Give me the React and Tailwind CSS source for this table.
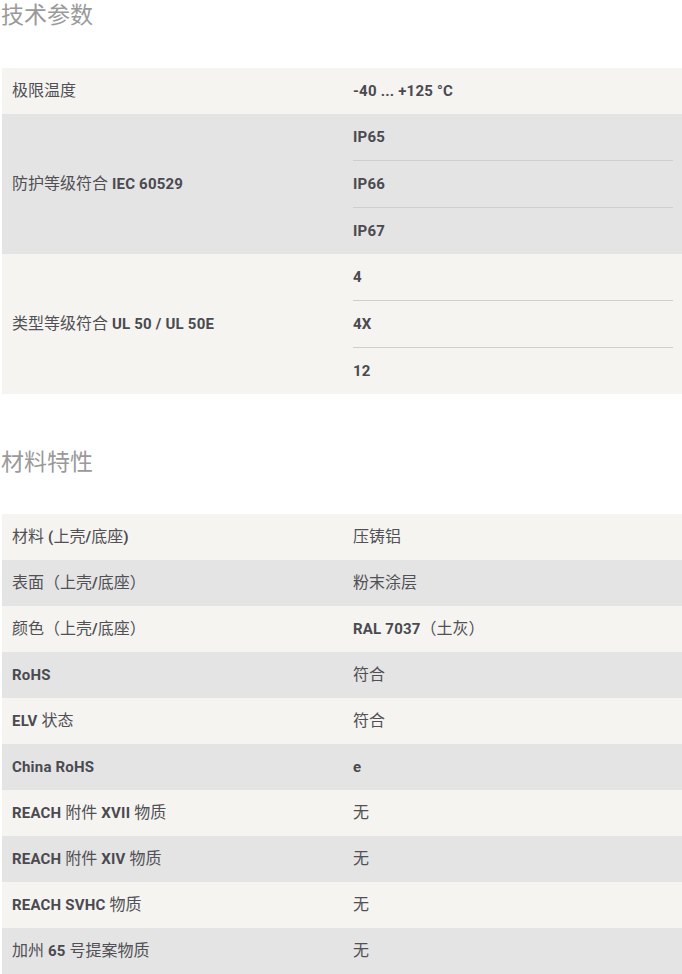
import { Fragment } from 'react'

const TECH = [
  { label: '极限温度', values: ['-40 ... +125 °C'] },
  { label: '防护等级符合 IEC 60529', values: ['IP65', 'IP66', 'IP67'] },
  { label: '类型等级符合 UL 50 / UL 50E', values: ['4', '4X', '12'] },
]

const MATERIAL = [
  { label: '材料 (上壳/底座)', values: ['压铸铝'] },
  { label: '表面（上壳/底座）', values: ['粉末涂层'] },
  { label: '颜色（上壳/底座）', values: ['RAL 7037（土灰）'] },
  { label: 'RoHS', values: ['符合'] },
  { label: 'ELV 状态', values: ['符合'] },
  { label: 'China RoHS', values: ['e'] },
  { label: 'REACH 附件 XVII 物质', values: ['无'] },
  { label: 'REACH 附件 XIV 物质', values: ['无'] },
  { label: 'REACH SVHC 物质', values: ['无'] },
  { label: '加州 65 号提案物质', values: ['无'] },
]

// latin runs are set heavier than the chinese ones
function Mixed({ text }) {
  const parts = text.split(/([\u3000-\u9fff\uff00-\uffef]+)/)
  return (
    <span>
      {parts.map((p, i) =>
        i % 2 === 1 ? (
          <span key={i} className="font-normal text-[16px] text-[#505055]">{p}</span>
        ) : (
          <span key={i} className="font-bold tracking-[0.2px]">{p}</span>
        )
      )}
    </span>
  )
}

function SpecTable({ rows }) {
  return (
    <div className="ml-[2px] w-[680px] grid grid-cols-2">
      {rows.map((row, i) => (
        <Fragment key={row.label}>
          <div className={`flex items-center pl-[10px] pr-[10px] ${i % 2 === 0 ? 'bg-[#f5f4f0]' : 'bg-[#e4e4e4]'}`}>
            <Mixed text={row.label} />
          </div>
          <div className={`pl-[11px] pr-[9px] ${i % 2 === 0 ? 'bg-[#f5f4f0]' : 'bg-[#e4e4e4]'}`}>
            {row.values.map((v, j) => (
              <div
                key={v}
                className={`flex items-center ${j > 0 ? 'border-t border-[#cecece] h-[47px]' : 'h-[46px]'}`}
              >
                <Mixed text={v} />
              </div>
            ))}
          </div>
        </Fragment>
      ))}
    </div>
  )
}

export default function App() {
  return (
    <div
      className="bg-white min-h-screen text-[15px] text-[#4a4a50]"
      style={{ fontFamily: 'Roboto, "Noto Sans CJK SC", sans-serif' }}
    >
      <h2 className="pl-[1px] h-[32px] text-[23px] leading-[32px] text-[#9a9a9a] font-normal">技术参数</h2>
      <div className="mt-[36px]">
        <SpecTable rows={TECH} />
      </div>
      <h2 className="mt-[53px] pl-[1px] h-[32px] text-[23px] leading-[32px] text-[#9a9a9a] font-normal">材料特性</h2>
      <div className="mt-[35px]">
        <SpecTable rows={MATERIAL} />
      </div>
    </div>
  )
}
